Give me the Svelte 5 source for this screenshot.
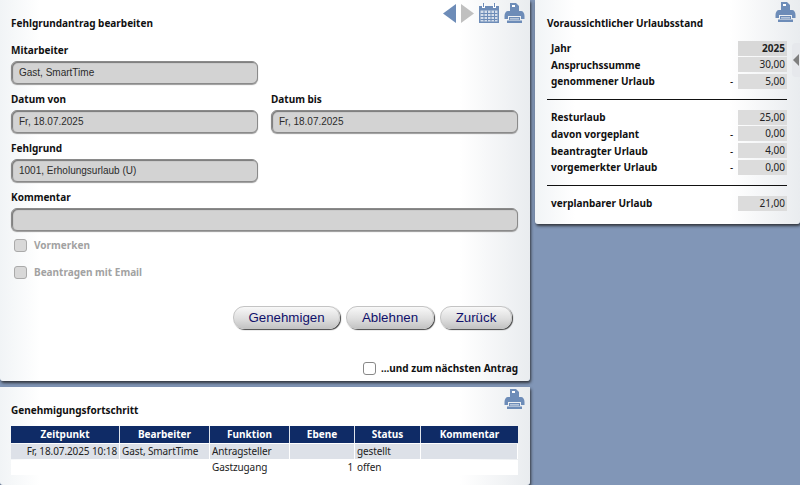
<script>
	const balance1 = [
		{ label: 'Jahr', value: '2025', strong: true },
		{ label: 'Anspruchssumme', value: '30,00' },
		{ label: 'genommener Urlaub', value: '5,00', minus: true }
	];
	const balance2 = [
		{ label: 'Resturlaub', value: '25,00' },
		{ label: 'davon vorgeplant', value: '0,00', minus: true },
		{ label: 'beantragter Urlaub', value: '4,00', minus: true },
		{ label: 'vorgemerkter Urlaub', value: '0,00', minus: true }
	];
	const balance3 = [{ label: 'verplanbarer Urlaub', value: '21,00' }];
	const columns = ['Zeitpunkt', 'Bearbeiter', 'Funktion', 'Ebene', 'Status', 'Kommentar'];
</script>

{#snippet printer(cls)}
	<svg class={cls} width="21" height="20" viewBox="0 0 21 20" aria-hidden="true">
		<path fill="#6d8cb8" d="M6 0h6l3 3v5H6z" />
		<path fill="#fff" d="M8 2h3v2H8z" />
		<path fill="#6d8cb8" d="M4 8h13c2 0 3.500 2 3.500 5v3H17v-3H4v3H.5v-3C.5 10 2 8 4 8z" />
		<path fill="#6d8cb8" d="M5 14h11v3H5zM3 17.500h15V20H3z" />
		<path fill="#fff" d="M6 15.500h9v.8H6z" />
	</svg>
{/snippet}

{#snippet rows(list)}
	{#each list as row}
		<div class="bal-row">
			<span class="bal-label">{row.label}</span>
			<span class="bal-sign">{row.minus ? '-' : ''}</span>
			<span class="bal-value" class:strong={row.strong}>{row.value}</span>
		</div>
	{/each}
{/snippet}

<div class="page">
	<div class="left">
		<section class="panel form-panel">
			<div class="tools">
				<svg width="13" height="19" viewBox="0 0 13 19" aria-hidden="true"><path fill="#6d8cb8" d="M13 0v19L0 9.500z" /></svg>
				<svg width="13" height="19" viewBox="0 0 13 19" aria-hidden="true"><path fill="#c0c0c0" d="M0 0v19l13-9.500z" /></svg>
				<svg width="20" height="20" viewBox="0 0 20 20" aria-hidden="true">
					<path fill="#6d8cb8" d="M0 3h20v17H0z" />
					<path fill="#d5deeb" d="M1.500 7.500h17V18.500h-17z" />
					<path fill="#6d8cb8" d="M1.500 10h17v1h-17zM1.500 13h17v1h-17zM1.500 16h17v1h-17zM4.500 7.500h1v11h-1zM8 7.500h1v11H8zM11.500 7.500h1v11h-1zM15 7.500h1v11h-1z" />
					<path fill="#fff" d="M3 1h3v4H3zM14 1h3v4h-3z" />
					<path fill="#6d8cb8" d="M4 0h1v4H4zM15 0h1v4h-1z" />
				</svg>
				{@render printer('tool-print')}
			</div>

			<h2>Fehlgrundantrag bearbeiten</h2>

			<div class="field">
				<span class="lbl">Mitarbeiter</span>
				<div class="box half">Gast, SmartTime</div>
			</div>
			<div class="two">
				<div class="col">
					<span class="lbl">Datum von</span>
					<div class="box">Fr, 18.07.2025</div>
				</div>
				<div class="col">
					<span class="lbl">Datum bis</span>
					<div class="box">Fr, 18.07.2025</div>
				</div>
			</div>
			<div class="field">
				<span class="lbl">Fehlgrund</span>
				<div class="box half">1001, Erholungsurlaub (U)</div>
			</div>
			<div class="field">
				<span class="lbl">Kommentar</span>
				<div class="box"></div>
			</div>

			<div class="check first"><span class="cb"></span><span>Vormerken</span></div>
			<div class="check second"><span class="cb"></span><span>Beantragen mit Email</span></div>

			<div class="buttons">
				<button class="w-gen">Genehmigen</button>
				<button class="w-abl">Ablehnen</button>
				<button class="w-zur">Zurück</button>
			</div>

			<div class="next"><span class="cb white"></span><span>...und zum nächsten Antrag</span></div>
		</section>

		<section class="panel progress-panel">
			{@render printer('progress-print')}
			<h2>Genehmigungsfortschritt</h2>
			<div class="table">
				{#each columns as c}<div class="th">{c}</div>{/each}
				<div class="td alt right">Fr, 18.07.2025 10:18</div>
				<div class="td alt">Gast, SmartTime</div>
				<div class="td alt">Antragsteller</div>
				<div class="td alt"></div>
				<div class="td alt">gestellt</div>
				<div class="td alt"></div>
				<div class="td"></div>
				<div class="td"></div>
				<div class="td">Gastzugang</div>
				<div class="td right">1</div>
				<div class="td">offen</div>
				<div class="td"></div>
			</div>
		</section>
	</div>

	<section class="panel balance">
		{@render printer('balance-print')}
		<h2>Voraussichtlicher Urlaubsstand</h2>
		<div class="bal-group">{@render rows(balance1)}</div>
		<hr />
		<div class="bal-group">{@render rows(balance2)}</div>
		<hr />
		<div class="bal-group">{@render rows(balance3)}</div>
		<div class="handle">
			<svg width="6" height="12" viewBox="0 0 6 12" aria-hidden="true"><path fill="#7f7f7f" d="M6 0v12L0 6z" /></svg>
		</div>
	</section>
</div>

<style>
:global(body) { background: #8196b7; overflow: hidden; }

.page {
	width: 800px; height: 485px; overflow: hidden;
	display: grid; grid-template-columns: 530px 265px; column-gap: 5px;
	align-items: start;
	font-family: "Noto Sans", sans-serif; color: #000;
}
.left { display: flex; flex-direction: column; gap: 6px; }

.panel {
	position: relative;
	background:
		linear-gradient(90deg, #f1f4f6 0, #fff 40px, #fff calc(100% - 70px), #e9ecef 100%);
	box-shadow: 1px 2px 3px rgba(30, 30, 30, 0.8);
	border-radius: 0 0 3px 3px;
}
h2 { margin: 0; font-size: 10px; font-weight: bold; line-height: 12px; color: #111; }

.form-panel { height: 381px; padding: 17px 12px 0 11px; box-sizing: border-box; }
.tools {
	position: absolute; top: 3px; right: 5px;
	display: flex; align-items: center; gap: 5px;
}
.form-panel h2 { margin-bottom: 15px; }
.field, .col { display: flex; flex-direction: column; }
.lbl { font-size: 10px; font-weight: bold; line-height: 12px; height: 12px; margin-bottom: 5px; color: #111; }
.box {
	height: 23px; box-sizing: border-box; padding: 0 7px;
	background: #d3d3d3; border: 1px solid #8a8a8a; border-radius: 6px;
	box-shadow: inset 1px 1px 1px #777, 0 1px 1px #999;
	font: 10px/21px "Liberation Sans", sans-serif; color: #2b2b2b;
}
.half { width: 247px; }
.field + .two, .two + .field, .field + .field { margin-top: 9px; }
.two { display: grid; grid-template-columns: 247px 247px; column-gap: 13px; }

.check {
	display: flex; align-items: center; gap: 7px;
	margin-left: 3px; font-size: 10px; font-weight: bold; color: #a2a2a2; line-height: 13px;
}
.check.first { margin-top: 8px; }
.check.second { margin-top: 14px; }
.cb {
	width: 13px; height: 13px; box-sizing: border-box; display: block;
	background: #d8d8d8; border: 1px solid #aaa; border-radius: 3px;
}
.cb.white { background: #fff; border-color: #888; }

.buttons { display: flex; justify-content: flex-end; gap: 6px; margin-top: 27px; padding-right: 6px; }
button {
	height: 23px; padding: 0; border: 1px solid #c4c4c4; border-radius: 11px;
	background: linear-gradient(#f8f8f8, #dcdcdc 60%, #c4c4c4);
	box-shadow: 1px 1px 1px #444;
	font: 13.3px "Liberation Sans", sans-serif; color: #10106a;
}
.w-gen { width: 107px; }
.w-abl { width: 88px; }
.w-zur { width: 72px; }

.next {
	position: absolute; top: 362px; right: 12px;
	display: flex; align-items: center; gap: 5px;
	font-size: 10px; font-weight: bold; line-height: 13px; color: #111;
}

.progress-panel { height: 98px; padding: 17px 12px 0 11px; box-sizing: border-box; }
.progress-print { position: absolute; top: 2px; right: 5px; }
.table {
	margin-top: 10px; width: 507px;
	display: grid; grid-template-columns: 109px 90px 80px 65px 66px 97px;
	row-gap: 1px;
	font: 10px/15px "Noto Sans", sans-serif;
}
.th {
	height: 17px; background: #0f2b66; color: #fff; font-weight: bold; text-align: center;
	line-height: 17px; box-sizing: border-box; border-right: 1px solid #dfe3ea;
}
.th:nth-child(6) { border-right: none; }
.td { height: 15px; padding: 0 2px; box-sizing: border-box; background: #fff; white-space: nowrap; color: #222; letter-spacing: -0.1px; }
.td.alt { background: #dde1e8; border-right: 1px solid #fff; }
.right { text-align: right; }

.balance { height: 224px; padding: 17px 13px 0 12px; box-sizing: border-box; width: 265px; }
.balance-print { position: absolute; top: 2px; right: 4px; }
.balance h2 { margin-bottom: 11px; }
.bal-group { display: flex; flex-direction: column; gap: 0.67px; padding-left: 4px; }
.bal-row { display: grid; grid-template-columns: 1fr 8px 49px; height: 16px; align-items: center; font-size: 10px; line-height: 16px; }
.bal-label { font-weight: bold; color: #111; }
.bal-sign { text-align: left; }
.bal-value { background: #dcdcdc; text-align: right; padding-right: 2px; height: 15px; line-height: 15px; color: #222; }
.bal-value.strong { font-weight: bold; background: #d8d8d8; }
hr { margin: 9.5px 0; border: none; border-top: 1px solid #111; }
.handle {
	position: absolute; top: 43px; right: 0; width: 8px; height: 34px;
	background: #e6e8ec; border-radius: 4px 0 0 4px;
	display: flex; align-items: center; justify-content: center;
}
</style>
